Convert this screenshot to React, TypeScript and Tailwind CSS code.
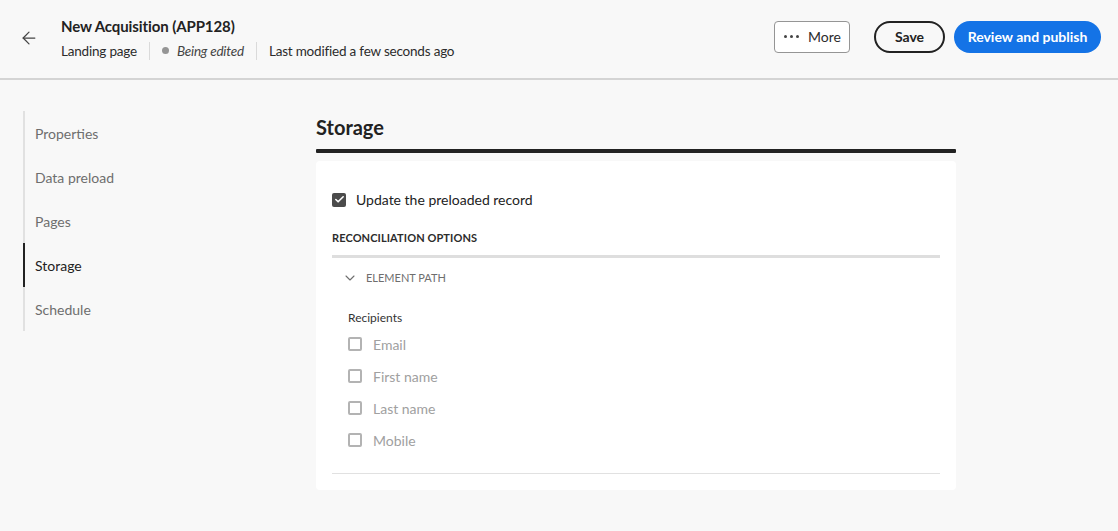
import { ArrowLeft, ChevronDown, Check } from "lucide-react";

const font = { fontFamily: "Lato, 'Noto Sans', sans-serif" };

const navItems = ["Properties", "Data preload", "Pages", "Storage", "Schedule"];
const recipients = ["Email", "First name", "Last name", "Mobile"];

export default function App() {
  return (
    <div className="min-h-[531px] bg-[#f8f8f8] text-[#222]" style={font}>
      {/* header */}
      <header className="h-[80px] border-b-2 border-[#d4d4d4] flex items-center pl-[19px] pr-[17px]">
        <ArrowLeft className="w-[20px] h-[20px] text-[#444] mt-[-3px]" strokeWidth={1.5} />
        <div className="ml-[22px] flex flex-col mt-[-3px]">
          <h1 className="text-[15px] font-bold leading-[20px] text-[#222] tracking-[-0.1px]">New Acquisition (APP128)</h1>
          <div className="flex items-center text-[13.5px] tracking-[-0.2px] text-[#2c2c2c] mt-[6px] leading-[18px]">
            <span>Landing page</span>
            <span className="w-px h-[18px] bg-[#dadada] mx-[12px]" />
            <span className="w-[7px] h-[7px] rounded-full bg-[#959595] mr-[8px]" />
            <span className="italic text-[#444]">Being edited</span>
            <span className="w-px h-[18px] bg-[#dadada] mx-[12px]" />
            <span>Last modified a few seconds ago</span>
          </div>
        </div>
        <div className="ml-auto flex items-center mt-[-5px]">
          <button className="h-[32px] w-[76px] border border-[#959595] rounded-[4px] bg-white flex items-center pl-[9px] text-[14px] text-[#2c2c2c]">
            <span className="flex gap-[3px] mr-[9px]">
              <span className="w-[3px] h-[3px] rounded-full bg-[#444]" />
              <span className="w-[3px] h-[3px] rounded-full bg-[#444]" />
              <span className="w-[3px] h-[3px] rounded-full bg-[#444]" />
            </span>
            More
          </button>
          <button className="ml-[24px] h-[32px] w-[71px] border-2 border-[#222] rounded-full text-[14px] font-bold text-[#222]">
            Save
          </button>
          <button className="ml-[9px] h-[32px] w-[147px] rounded-full bg-[#1473e6] text-white text-[14px] font-bold">
            Review and publish
          </button>
        </div>
      </header>

      <div className="flex pl-[23px] pt-[32px]">
        {/* sidebar */}
        <nav className="w-[293px] shrink-0">
          <ul className="border-l-2 border-[#e1e1e1] w-[200px] -mt-px">
            {navItems.map((item) => (
              <li
                key={item}
                className={
                  item === "Storage"
                    ? "h-[44px] flex items-center pl-[10px] -ml-[2px] border-l-2 border-[#222] text-[14px] text-[#222]"
                    : "h-[44px] flex items-center pl-[10px] text-[14px] text-[#6e6e6e]"
                }
              >
                {item}
              </li>
            ))}
          </ul>
        </nav>

        {/* main */}
        <main className="w-[640px]">
          <h2 className="text-[20px] font-bold leading-[26px] text-[#222] mt-[2px]">Storage</h2>
          <div className="h-[4px] bg-[#222] rounded-[1px] mt-[9px]" />
          <section className="mt-[8px] bg-white rounded-[4px] px-[16px] pt-[28px] pb-[16px]">
            <label className="flex items-center gap-[10px]">
              <span className="w-[14px] h-[14px] rounded-[2px] bg-[#4b4b4b] flex items-center justify-center">
                <Check className="w-[11px] h-[11px] text-white" strokeWidth={3.5} />
              </span>
              <span className="text-[14px] text-[#222]">Update the preloaded record</span>
            </label>
            <div className="mt-[20px] text-[11px] font-bold text-[#2c2c2c] tracking-[0.1px]">RECONCILIATION OPTIONS</div>
            <div className="mt-[8px] h-[3px] bg-[#dedede]" />
            <div className="flex items-center mt-[12px] pl-[10px] text-[11px] text-[#6e6e6e]">
              <ChevronDown className="w-[16px] h-[16px] text-[#6e6e6e]" strokeWidth={1.6} />
              <span className="ml-[8px]">ELEMENT PATH</span>
            </div>
            <div className="pl-[16px] mt-[23px] text-[12px] text-[#333]">Recipients</div>
            <ul className="pl-[16px] mt-px">
              {recipients.map((r) => (
                <li key={r} className="h-[32px] flex items-center gap-[11px]">
                  <span className="w-[14px] h-[14px] rounded-[2px] border-2 border-[#b3b3b3]" />
                  <span className="text-[14px] text-[#a0a0a0]">{r}</span>
                </li>
              ))}
            </ul>
            <div className="mt-[17px] h-px bg-[#e1e1e1]" />
          </section>
        </main>
      </div>
    </div>
  );
}
